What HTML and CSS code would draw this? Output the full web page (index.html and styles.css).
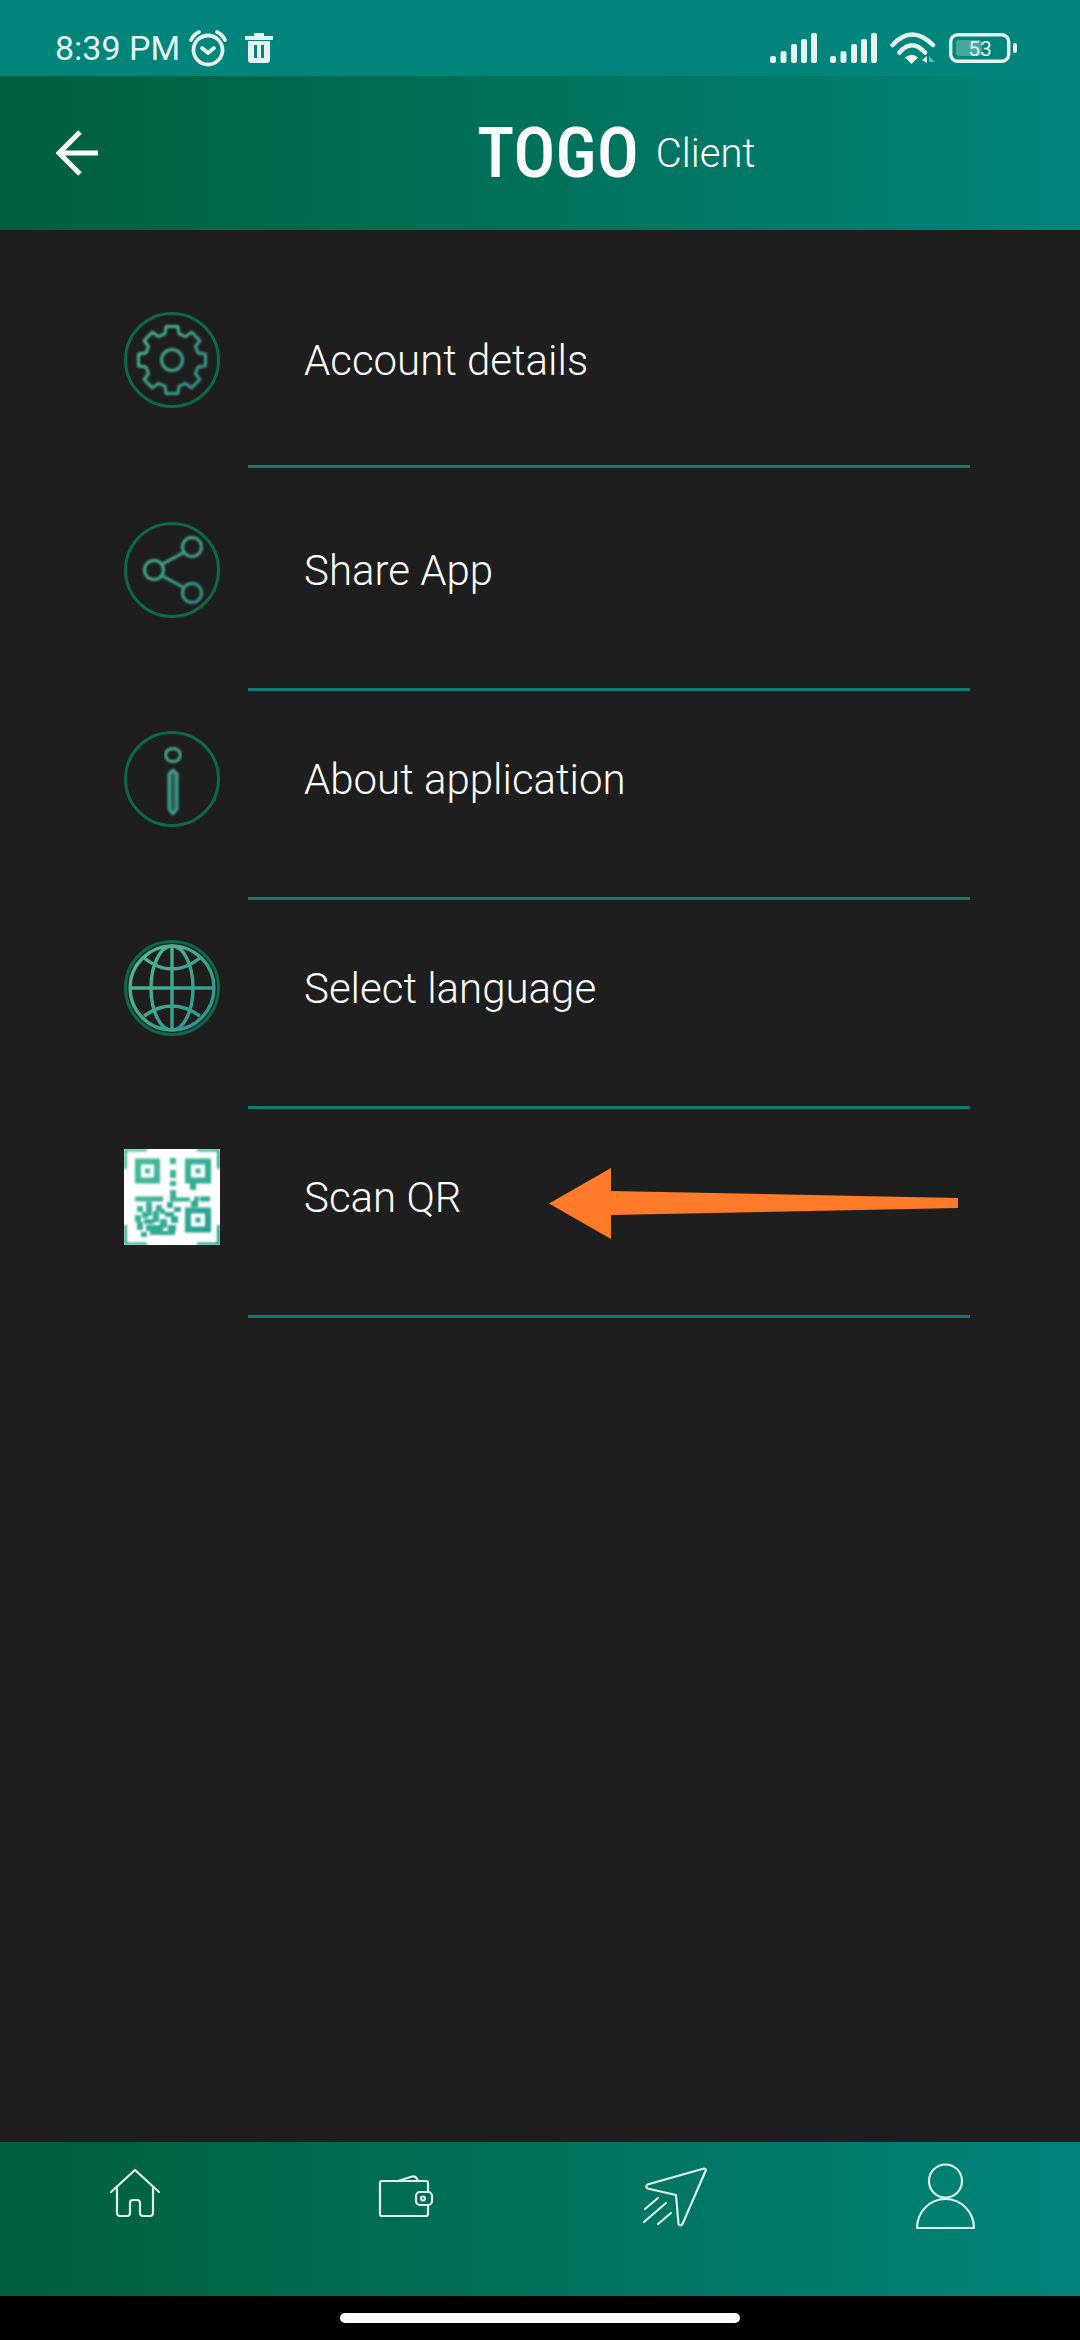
FILE: index.html
```html
<!DOCTYPE html>
<html lang="en">
<head>
<meta charset="utf-8">
<title>TOGO Client</title>
<link rel="stylesheet" href="styles.css">
</head>
<body>
<div class="app">
  <div class="status">
    <span class="time">8:39 PM</span>
    <svg class="st-alarm" width="44" height="40" viewBox="0 0 44 40"><circle cx="21" cy="22" r="14.5"/><path d="M15 20l6 5 6-5M4 12q3-6 8-8M30 4q5 2 8 8"/></svg>
    <svg class="st-trash" width="28" height="30" viewBox="0 0 28 30"><path d="M0 3h9V0h10v3h9v4H0zM3 8h22v19a3 3 0 0 1-3 3H6a3 3 0 0 1-3-3z"/><path class="slit" d="M9 12h3v13H9zM16 12h3v13h-3z"/></svg>
    <div class="status-right">
      <svg width="47" height="30" viewBox="0 0 47 30"><rect x="0" y="23" width="6" height="7" rx="2"/><rect x="10.5" y="18" width="6" height="12" rx="2"/><rect x="21" y="11" width="6" height="19" rx="2"/><rect x="31" y="6" width="6" height="24" rx="2"/><rect x="41" y="0" width="6" height="30" rx="2"/></svg>
      <svg width="47" height="30" viewBox="0 0 47 30"><rect x="0" y="23" width="6" height="7" rx="2"/><rect x="10.5" y="18" width="6" height="12" rx="2"/><rect x="21" y="11" width="6" height="19" rx="2"/><rect x="31" y="6" width="6" height="24" rx="2"/><rect x="41" y="0" width="6" height="30" rx="2"/></svg>
      <svg class="st-wifi" width="46" height="32" viewBox="0 0 46 32"><path class="arc" d="M2.500 13Q22-8 43 13M9.500 20.500Q22 6 35 20.500"/><path d="M15 25.500Q22 20 28 25.500L21.500 32z"/><path d="M37 24v7l-5-3z"/><path class="dim" d="M39 24l6 6h-6z"/></svg>
      <svg class="st-batt" width="68" height="30" viewBox="0 0 68 30"><rect class="b-frame" x="1.700" y="1.700" width="58" height="26.600" rx="7"/><rect class="b-fill" x="7" y="7" width="26" height="16" rx="3"/><rect x="64" y="10" width="4" height="10" rx="2"/><text x="31" y="22.500" text-anchor="middle">53</text></svg>
    </div>
  </div>
  <header class="header">
    <svg class="back" width="44" height="46" viewBox="0 0 44 46"><path d="M42 23H3M24 2L3 23l21 21"/></svg>
    <span class="brand">TOGO</span><span class="sub">Client</span>
  </header>
  <main class="menu">
    <div class="row row-first">
      <div class="row-body">
        <svg class="ico" viewBox="-48 -48 96 96">
          <defs>
            <linearGradient id="ig" gradientUnits="userSpaceOnUse" x1="-40" y1="-30" x2="40" y2="30"><stop offset="0" stop-color="#52b892"/><stop offset="1" stop-color="#2f9391"/></linearGradient>
            <linearGradient id="qg" gradientUnits="userSpaceOnUse" x1="0" y1="0" x2="96" y2="96"><stop offset="0" stop-color="#4dc09a"/><stop offset="1" stop-color="#1f9a90"/></linearGradient>
            <filter id="soft" x="-10%" y="-10%" width="120%" height="120%"><feGaussianBlur stdDeviation="1"/></filter>
            <filter id="softer" x="-10%" y="-10%" width="120%" height="120%"><feGaussianBlur stdDeviation="0.5"/></filter>
          </defs>
          <circle class="ring" r="46.500"/>
          <g class="glyph">
            <path d="M26.100-7L33.500-5.900V5.900L26.100 7L23.400 13.500L27.900 19.500L19.500 27.900L13.500 23.400L7 26.100L5.900 33.500H-5.900L-7 26.100L-13.500 23.400L-19.500 27.900L-27.900 19.500L-23.400 13.500L-26.100 7L-33.500 5.900V-5.900L-26.100-7L-23.400-13.500L-27.900-19.500L-19.500-27.900L-13.500-23.400L-7-26.100L-5.900-33.500H5.900L7-26.100L13.500-23.400L19.500-27.900L27.900-19.500L23.400-13.500z"/>
            <circle r="10.500"/>
          </g>
        </svg>
        <span class="label">Account details</span>
      </div>
      <div class="rule rule-first"></div>
    </div>
    <div class="row row-second">
      <div class="row-body">
        <svg class="ico" viewBox="-48 -48 96 96">
          <circle class="ring" r="46.500"/>
          <g class="glyph"><circle cx="20" cy="-23" r="9.500"/><circle cx="-18" r="9.500"/><circle cx="20" cy="23" r="9.500"/><path d="M-10.500-5.500L12.500-18M-10.500 5.500L12.500 18"/></g>
        </svg>
        <span class="label">Share App</span>
      </div>
      <div class="rule"></div>
    </div>
    <div class="row">
      <div class="row-body">
        <svg class="ico" viewBox="-48 -48 96 96">
          <circle class="ring" r="46.500"/>
          <g class="glyph"><ellipse cx="1" cy="-24" rx="7.500" ry="6.500"/><path class="info-bar" d="M-3-5L1-9l4 4V30L1 35l-4-5z"/></g>
        </svg>
        <span class="label">About application</span>
      </div>
      <div class="rule"></div>
    </div>
    <div class="row">
      <div class="row-body">
        <svg class="ico" viewBox="-48 -48 96 96">
          <circle class="ring" r="46.500"/>
          <g class="globe"><circle r="42"/><ellipse rx="21" ry="42"/><path d="M0-42V42M-42 0H42M-28-30Q0-8 28-30M-28 28Q0 8 28 28"/></g>
        </svg>
        <span class="label">Select language</span>
      </div>
      <div class="rule"></div>
    </div>
    <div class="row row-scan">
      <div class="row-body">
        <svg class="ico" viewBox="0 0 96 96">
          <rect class="qr-bg" width="96" height="96"/>
          <g class="qr">
            <path class="qr-fill" d="M0 0H23V2.500H3V20H0zM96 0H73V2.500H93V20H96zM0 96H23V93.500H3V76H0zM96 96H73V93.500H93V76H96z"/>
            <rect class="qr-line" x="14" y="12.500" width="19" height="19"/>
            <rect class="qr-line" x="64" y="12.500" width="20" height="19"/>
            <rect class="qr-line" x="64" y="61.500" width="20" height="19"/>
            <path class="qr-fill" d="M21 19.500h5v5h-5zM71.500 19.500h5v5h-5zM71.500 68.500h5v5h-5zM46 9h6v6h-6zM46 21h6v8h-6zM46 32h6v5h-6zM66 34h6v7h-6zM11 47.500h28v5H11zM46 41h6v8h-6zM46 48.500h20v4H46zM70 47.500h5v5h-5zM76 47.500h10v5H76zM67 52h7v6h-7zM13 57h6v6h-6zM22 53h6v14h-6zM32 56h6v6h-6zM43 53h6v6h-6zM36 60h5v5h-5zM11 66h6v7h-6zM18 63h6v6h-6zM29 62h6v11h-6zM41 63h9v5h-9zM13 73h6v8h-6zM20 70h10v5H20zM36 70h7v9h-7zM22 76h17v6H22zM44 76h8v6h-8zM17 83h6v5h-6zM26 82h25v4H26zM50 58h7v5h-7zM47 67h7v7h-7z"/>
          </g>
        </svg>
        <span class="label">Scan QR</span>
      </div>
      <svg class="pointer" width="409" height="72" viewBox="0 0 409 72"><path d="M0 35.500L62 0V23L409 30V40L62 47V71z"/></svg>
      <div class="rule"></div>
    </div>
  </main>
  <nav class="nav">
    <div class="nav-item"><svg width="80" height="80" viewBox="0 0 80 80"><path d="M16 35L40 13l24 22M22 31V56a3 3 0 0 0 3 3h7a3 3 0 0 0 3-3V46a3 3 0 0 1 3-3h4a3 3 0 0 1 3 3V56a3 3 0 0 0 3 3h7a3 3 0 0 0 3-3V31"/></svg></div>
    <div class="nav-item"><svg class="nudge" width="80" height="80" viewBox="0 0 80 80"><path d="M62 35V26a2 2 0 0 0-2-2H16a2 2 0 0 0-2 2V57a2 2 0 0 0 2 2H60a2 2 0 0 0 2-2V48M32 24l14-4.500q4-1 6 4.500"/><rect x="50" y="35" width="16" height="13" rx="4"/><circle cx="57" cy="41.500" r="2"/></svg></div>
    <div class="nav-item"><svg width="80" height="80" viewBox="0 0 80 80"><path d="M12.500 27.500L69 11.500q2.500 0 1.500 2.500L47.500 67q-2.500 3-4 0L41 38 12.500 31.500q-2.500-2 0-4zM10 52l13-11M9 65l22-19M23 67l13-11"/></svg></div>
    <div class="nav-item"><svg class="nudge" width="80" height="80" viewBox="0 0 80 80"><circle cx="39.500" cy="24" r="16.500"/><path d="M11 71a28.500 29 0 0 1 57 0z"/></svg></div>
  </nav>
  <div class="gesture"><div class="pill"></div></div>
</div>
</body>
</html>
```
FILE: styles.css
```css
html, body { margin: 0; padding: 0; background: #1e1e1e; }
.app { width: 1080px; height: 2340px; display: flex; flex-direction: column; overflow: hidden; color: #fff; }

.status { height: 76px; box-sizing: border-box; padding: 19px 63px 0 55px; background: #01857a; display: flex; align-items: center; color: #e3f4f1; }
.status svg { fill: #e3f4f1; display: block; }
.time { font: 34px Roboto, sans-serif; line-height: 40px; }
.st-alarm { margin-left: 7px; }
.st-alarm circle, .st-alarm path { fill: none; stroke: #e3f4f1; stroke-width: 3.8; stroke-linecap: round; stroke-linejoin: round; }
.st-trash { margin-left: 14px; }
.slit { fill: #01857a; }
.status-right { margin-left: auto; display: flex; align-items: center; gap: 13px; }
.st-wifi .arc { fill: none; stroke: #e3f4f1; stroke-width: 4.500; stroke-linecap: round; }
.st-wifi .dim { opacity: .45; }
.status .b-frame { fill: none; stroke: #e3f4f1; stroke-width: 3.400; }
.status .b-fill { fill: #e3f4f1; opacity: .3; }
.st-batt text { font: 21px Roboto, sans-serif; fill: #e3f4f1; }

.header { height: 154px; flex: none; box-sizing: border-box; padding-left: 56px; background: linear-gradient(90deg, #005f3c, #00847a); display: flex; align-items: center; }
.back { fill: none; stroke: #fff; stroke-width: 5; }
.brand { font: 500 70px Roboto, sans-serif; font-stretch: 75%; margin-left: 377px; line-height: 90px; }
.sub { font: 300 40px Roboto, sans-serif; margin-left: 17px; }

.menu { flex: 1; background: #1e1e1e; }
.row { padding-top: 40px; position: relative; }
.row-first { padding-top: 82px; }
.row-second { padding-top: 54px; }
.row-body { display: flex; align-items: center; gap: 84px; padding-left: 124px; }
.label { font: 300 42px Roboto, sans-serif; }
.rule { height: 3px; margin: 70px 110px 0 248px; background: #0d7d73; }
.rule-first { margin-top: 57px; }

.ico { width: 96px; height: 96px; display: block; flex: none; }
.ring { fill: none; stroke: #0b6a4a; stroke-width: 3; }
.glyph { fill: none; stroke: url(#ig); stroke-width: 3; stroke-linejoin: round; filter: url(#soft); }
.info-bar { fill: #2a5f50; }
.globe { fill: none; stroke: url(#ig); stroke-width: 3.400; filter: url(#softer); }
.qr-bg { fill: #fff; }
.qr { filter: url(#soft); }
.qr-fill { fill: url(#qg); }
.qr-line { fill: none; stroke: url(#qg); stroke-width: 6; }
.pointer { position: absolute; left: 549px; top: 59px; }
.pointer path { fill: #ff7a29; }

.nav { height: 154px; flex: none; box-sizing: border-box; padding-top: 15px; background: linear-gradient(90deg, #005f3c, #00847a); display: grid; grid-template-columns: repeat(4, 1fr); }
.nav-item { display: flex; justify-content: center; }
.nav-item svg { display: block; fill: none; stroke: #dff3ee; stroke-width: 2.200; stroke-linecap: round; stroke-linejoin: round; }
.nav-item .nudge { margin-left: 2px; }

.gesture { height: 44px; flex: none; background: #000; padding-top: 17px; box-sizing: border-box; }
.pill { width: 400px; height: 10px; margin: 0 auto; border-radius: 5px; background: #fff; }
```
